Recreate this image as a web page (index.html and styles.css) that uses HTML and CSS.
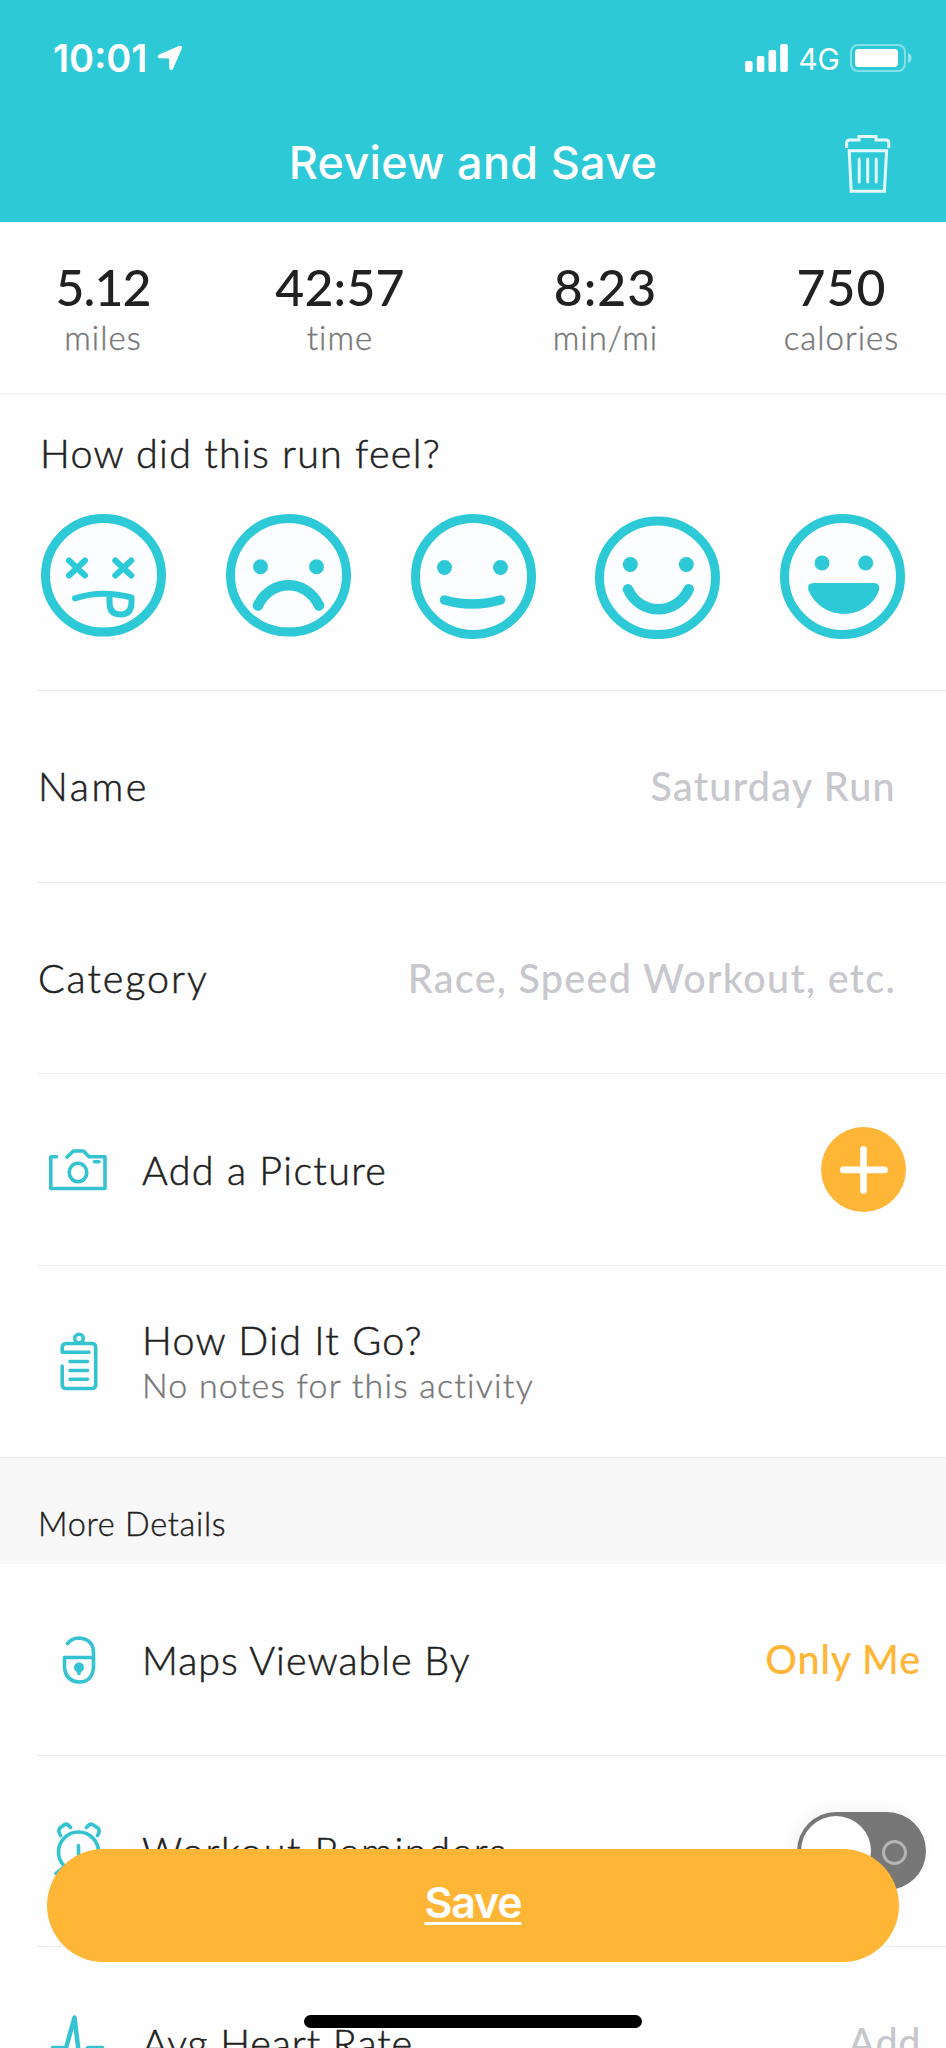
FILE: index.html
```html
<!doctype html>
<html lang="en">
<head>
    <meta charset="UTF-8">
    <meta name="viewport" content="width=device-width, initial-scale=1.0">
    <title>Review and Save</title>
    <link rel="stylesheet" href="styles.css">
</head>
<body>
<div id="app">
    <header id="header">
        <div class="status">
            <span class="clock">10:01</span>
            <svg class="location" width="26" height="26" viewBox="0 0 26 26">
                <path d="M2 9.500 L22 1 Q25.800 0 24.800 3.500 L16 24 Q14 26.600 12.300 23.600 L12 13.600 L2.600 13.200 Q-1 12 2 9.500 Z" fill="#fff"/>
            </svg>
            <svg class="signal" width="43" height="28" viewBox="0 0 43 28">
                <rect x="0" y="17" width="7.6" height="11" rx="2" fill="#fff"/>
                <rect x="11.8" y="12" width="7.6" height="16" rx="2" fill="#fff"/>
                <rect x="23.5" y="6" width="7.6" height="22" rx="2" fill="#fff"/>
                <rect x="35.2" y="0" width="7.6" height="28" rx="2" fill="#fff"/>
            </svg>
            <span class="network">4G</span>
            <svg class="battery" width="62" height="28" viewBox="0 0 62 28">
                <rect x="1" y="1" width="54" height="26" rx="7" fill="none" stroke="#fff" stroke-opacity=".42" stroke-width="2"/>
                <rect x="5" y="5" width="43" height="18" rx="3.5" fill="#fff"/>
                <path d="M58 9 Q61.5 10.5 61.5 14 Q61.5 17.5 58 19 Z" fill="#fff" fill-opacity=".5"/>
            </svg>
        </div>
        <div class="navbar">
            <h1>Review and Save</h1>
            <svg class="trash" width="46" height="58" viewBox="0 0 46 58" fill="none" stroke="#fff" stroke-width="3">
                <path d="M1.6 13 V8 Q1.6 5 4.6 5 H14 V1.6 H31 V5 H41 Q43.8 5 43.8 8 V13" stroke-opacity=".88"/>
                <path d="M4.2 15.8 H41.6 L39.4 56.2 H6.2 Z" stroke-opacity=".88"/>
                <path d="M14.2 24 V47 M22.7 24 V47 M31.2 24 V47" stroke-linecap="round" stroke-opacity=".85"/>
            </svg>
        </div>
    </header>

    <ul id="stats">
        <li><strong class="distance">5.12</strong><span>miles</span></li>
        <li><strong class="duration">42:57</strong><span>time</span></li>
        <li><strong>8:23</strong><span>min/mi</span></li>
        <li><strong>750</strong><span>calories</span></li>
    </ul>

    <div id="feel">
        <h2>How did this run feel?</h2>
        <ul class="faces">
            <li>
                <svg width="125" height="125" viewBox="0 0 125 125">
                    <ellipse class="ring" cx="62.5" cy="61.3" rx="58" ry="56.8"/>
                    <g class="line thin">
                        <path d="M28 46.5 L44 61.5 M44 46.5 L28 61.5 M74.300 46.500 L90.300 61.500 M90.300 46.500 L74.300 61.500"/>
                        <path d="M34 84.300 Q61 75.500 90.500 83.500 V88.500 Q90.500 100.500 79.500 100.500 Q68.500 100.500 68.500 88.500 V81"/>
                    </g>
                </svg>
            </li>
            <li>
                <svg width="125" height="125" viewBox="0 0 125 125">
                    <ellipse class="ring" cx="62.5" cy="61.3" rx="58" ry="56.8"/>
                    <circle class="eye" cx="34.500" cy="52.700" r="7.500"/>
                    <circle class="eye" cx="90.500" cy="52.700" r="7.500"/>
                    <path class="line" d="M32 91.500 C44.500 64.500 80.500 64.500 93 91.500"/>
                </svg>
            </li>
            <li>
                <svg width="125" height="125" viewBox="0 0 125 125">
                    <circle class="ring" cx="62.5" cy="62.5" r="58"/>
                    <circle class="eye" cx="33.500" cy="53.500" r="7.500"/>
                    <circle class="eye" cx="89.500" cy="53.500" r="7.500"/>
                    <path class="line medium" d="M33.500 86 Q61 94 89.500 86"/>
                </svg>
            </li>
            <li>
                <svg width="125" height="125" viewBox="0 0 125 125">
                    <ellipse class="ring" cx="62.5" cy="63.800" rx="58" ry="56.8"/>
                    <circle class="eye" cx="35.300" cy="50.500" r="7.500"/>
                    <circle class="eye" cx="91.300" cy="50.500" r="7.500"/>
                    <path class="line" d="M33 75.300 C45 101.900 81.500 101.900 93.800 75.300"/>
                </svg>
            </li>
            <li>
                <svg width="125" height="125" viewBox="0 0 125 125">
                    <circle class="ring" cx="62.5" cy="62.5" r="58"/>
                    <circle class="eye" cx="42" cy="49" r="7.500"/>
                    <circle class="eye" cx="85.700" cy="49" r="7.500"/>
                    <path class="eye" d="M33 69 H94.500 Q101 69.500 99 76.500 C87 107.500 42 108 28.500 76.500 Q26.500 69.500 33 69 Z"/>
                </svg>
            </li>
        </ul>
    </div>

    <ul class="rows">
        <li>
            <span class="label name">Name</span>
            <span class="value hint">Saturday Run</span>
        </li>
        <li>
            <span class="label category">Category</span>
            <span class="value hint">Race, Speed Workout, etc.</span>
        </li>
        <li>
            <svg class="icon" width="60" height="60" viewBox="0 0 60 60">
                <path d="M8.500 16.800 H2.800 V48.500 H57 V16.800 H41 L35.500 11 H25.500 L19 17"/>
                <path d="M46.500 21.800 H51"/>
                <ellipse cx="30" cy="32.500" rx="8.800" ry="9.300"/>
            </svg>
            <span class="label">Add a Picture</span>
            <button class="add" aria-label="Add a picture">
                <svg width="85" height="85" viewBox="0 0 85 85">
                    <path d="M42.500 22.300 V63.500 M22.300 42.900 H63.500" stroke="#fff" stroke-width="6.600" stroke-linecap="round"/>
                </svg>
            </button>
        </li>
        <li>
            <svg class="icon" width="60" height="60" viewBox="0 0 60 60">
                <circle cx="31" cy="7.500" r="4.300"/>
                <path d="M41 21.300 H14.200 V16.500 Q14.200 12.500 18.200 12.500 H43.700 Q47.700 12.500 47.700 16.500 V53.500 Q47.700 57.500 43.700 57.500 H18.200 Q14.200 57.500 14.200 53.500 V35"/>
                <path d="M22 30.500 H39.500 M22 39.500 H39.500 M22 48.300 H39.500"/>
            </svg>
            <div class="notes">
                <span class="label">How Did It Go?</span>
                <small>No notes for this activity</small>
            </div>
        </li>
    </ul>

    <h3 class="section">More Details</h3>

    <ul class="rows details">
        <li>
            <svg class="icon" width="60" height="60" viewBox="0 0 60 60">
                <path d="M19.500 13.500 Q24 8 31 8 Q45.500 9 45.500 23 V37 Q44.500 52 31 52 Q17.500 51 16.500 37 V27.500 H45"/>
                <circle cx="31" cy="37.500" r="5" class="solid"/>
                <path d="M31 38 V43.500"/>
            </svg>
            <span class="label maps">Maps Viewable By</span>
            <span class="value link">Only Me</span>
        </li>
        <li>
            <svg class="icon" width="60" height="60" viewBox="0 0 60 60">
                <circle cx="30.500" cy="31" r="20"/>
                <path d="M12.500 14.500 Q9.500 9 12 7 L17 3.300 Q19.500 2.500 22.500 6.500 M38.500 6.500 Q42 2 44.500 3.500 L50 7 Q52.500 10 49.500 14.500"/>
                <path d="M30.500 24.500 V38 M8 52.500 L15 47"/>
            </svg>
            <span class="label reminders">Workout Reminders</span>
            <span class="switch"><i class="knob"></i><i class="off"></i></span>
        </li>
        <li>
            <svg class="icon heart" width="60" height="60" viewBox="0 0 60 60">
                <path d="M5 35 H18 L26.500 4.500 L32 50 L40 35 H54"/>
            </svg>
            <span class="label rate">Avg Heart Rate</span>
            <span class="value hint heartrate">Add</span>
        </li>
    </ul>

    <a class="save" href="#">Save</a>
    <div class="home"></div>
</div>
</body>
</html>
```
FILE: styles.css
```css
* {
    margin: 0;
    padding: 0;
    box-sizing: border-box;
    list-style: none;
}
body{
    background: #fefefe;
    font-family: Lato, "Open Sans", sans-serif;
    color: #212121;
}
#app{
    position: relative;
    width: 946px;
    height: 2048px;
    overflow: hidden;
}

/* header */
#header{
    height: 222px;
    background: #2dc9d7;
    color: #fff;
    font-family: Inter, "Liberation Sans", sans-serif;
}
.status{
    height: 116px;
    padding: 0 34px 0 53px;
    display: flex;
    align-items: center;
}
.clock{
    font-size: 38px;
    font-weight: 600;
    letter-spacing: 0;
}
.location{
    margin-left: 10px;
}
.signal{
    margin-left: auto;
}
.network{
    margin: 2px 10px 0 10px;
    font-size: 30px;
    font-weight: 400;
}
.navbar{
    display: grid;
    grid-template-columns: 1fr auto 1fr;
    align-items: center;
    padding: 0 55px 2px 55px;
    height: 94px;
}
.navbar h1{
    grid-column: 2;
    font-size: 45px;
    font-weight: 500;
    letter-spacing: .3px;
}
.trash{
    justify-self: end;
    margin-top: 3px;
}

/* totals */
#stats{
    height: 173px;
    padding-top: 35px;
    display: grid;
    grid-template-columns: 206px 268px 263px 1fr;
    border-bottom: 2px solid #f5f5f5;
    text-align: center;
}
#stats strong{
    display: block;
    font-size: 50px;
    line-height: 60px;
    font-weight: 500;
    letter-spacing: 1px;
}
#stats .distance{
    letter-spacing: -1px;
}
#stats .duration{
    letter-spacing: .2px;
}
#stats span{
    display: block;
    font-size: 33px;
    line-height: 40px;
    font-weight: 300;
    letter-spacing: 1px;
    color: #777;
    -webkit-text-stroke: .4px #777;
}

/* faces */
#feel{
    height: 295px;
    padding: 34px 41px 0 41px;
}
#feel h2{
    margin-left: -1px;
    font-size: 39.5px;
    line-height: 48px;
    font-weight: 300;
    letter-spacing: 1.25px;
    -webkit-text-stroke: .5px #212121;
}
.faces{
    margin-top: 37px;
    display: flex;
    justify-content: space-between;
}
.faces svg{
    display: block;
}
.ring{
    fill: #fbfdff;
    stroke: #2dc9d7;
    stroke-width: 9;
}
.eye{
    fill: #2dc9d7;
}
.line{
    fill: none;
    stroke: #2dc9d7;
    stroke-width: 10.5;
    stroke-linecap: round;
    stroke-linejoin: round;
}
.line.medium{
    stroke-width: 9.5;
}
.line.thin{
    stroke-width: 6;
}

/* list */
.rows{
    margin-left: 37px;
}
.rows li{
    height: 191.7px;
    padding: 0 27px 0 1px;
    display: flex;
    align-items: center;
    border-top: 1px solid #ededed;
}
.details li:first-child{
    height: 190.5px;
    border-top: 0;
}
.label{
    font-size: 39.5px;
    line-height: 48px;
    font-weight: 300;
    letter-spacing: 1.3px;
    -webkit-text-stroke: .5px #212121;
}
.label.name{
    letter-spacing: 2.6px;
}
.label.category{
    letter-spacing: 1.9px;
}
.label.maps{
    letter-spacing: 1px;
}
.label.reminders{
    letter-spacing: 1.6px;
}
.label.rate{
    letter-spacing: .9px;
}
.icon{
    width: 60px;
    height: 60px;
    margin: 0 34px 0 10px;
    fill: none;
    stroke: #35c3d2;
    stroke-width: 3.6;
    stroke-linecap: round;
    stroke-linejoin: round;
}
.icon .solid{
    fill: #35c3d2;
    stroke: none;
}
.icon.heart{
    stroke-width: 4.5;
}
.value{
    margin: 0 0 2px auto;
    font-size: 39.5px;
    font-weight: 500;
    letter-spacing: 1.3px;
}
.hint{
    color: #c7c7cc;
    margin-right: 23px;
}
.link{
    color: #ffb536;
    margin-right: -2px;
    letter-spacing: .9px;
}
.heartrate{
    margin-right: -2px;
    letter-spacing: .6px;
}
.add{
    width: 85px;
    height: 85px;
    margin-left: auto;
    margin-right: 13px;
    border: 0;
    border-radius: 50%;
    background: #ffb536;
}
.add svg{
    display: block;
}
.notes small{
    display: block;
    font-size: 34px;
    line-height: 42px;
    font-weight: 300;
    letter-spacing: 1.2px;
    color: #777;
    -webkit-text-stroke: .4px #777;
}
.section{
    height: 107.5px;
    padding: 46px 38px 0 38px;
    background: #f7f7f7;
    border-top: 1px solid #ececec;
    font-size: 32.5px;
    line-height: 40px;
    font-weight: 300;
    letter-spacing: .7px;
    -webkit-text-stroke: .4px #212121;
}
.switch{
    position: relative;
    width: 129px;
    height: 78px;
    margin-left: auto;
    margin-right: -7px;
    border-radius: 39px;
    background: #777;
    box-shadow: -4px -2px 16px rgba(0,0,0,.04);
}
.knob{
    position: absolute;
    left: 4px;
    top: 4px;
    width: 70px;
    height: 70px;
    border-radius: 50%;
    background: #fff;
}
.off{
    position: absolute;
    right: 19px;
    top: 28px;
    width: 25px;
    height: 25px;
    border: 3px solid #b5b5b5;
    border-radius: 50%;
}

/* floating button */
.save{
    position: absolute;
    left: 47px;
    bottom: 86px;
    width: 852px;
    height: 113px;
    border-radius: 57px;
    background: #ffb536;
    color: #fff;
    font-family: Inter, "Liberation Sans", sans-serif;
    font-size: 43px;
    line-height: 107px;
    font-weight: 600;
    letter-spacing: -1.2px;
    text-align: center;
    text-decoration-thickness: 3px;
    text-underline-offset: 4px;
}
.home{
    position: absolute;
    left: 304px;
    bottom: 20px;
    width: 338px;
    height: 13px;
    border-radius: 7px;
    background: #000;
}
```
